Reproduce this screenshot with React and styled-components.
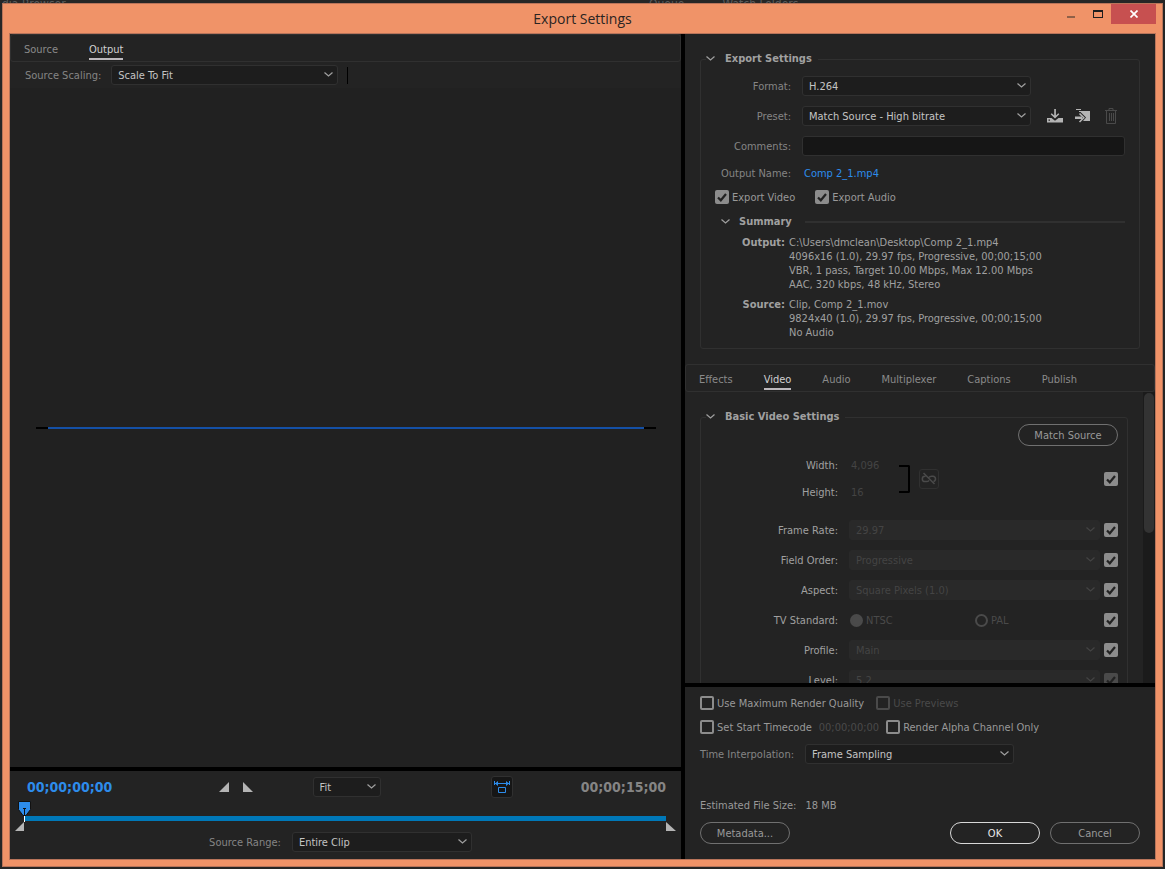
import { useState } from "react";
import styled, { createGlobalStyle, css } from "styled-components";

const TEXT_FONT = `"DejaVu Sans Condensed", "DejaVu Sans", sans-serif`;

const tick = `url("data:image/svg+xml,%3Csvg xmlns='http://www.w3.org/2000/svg' viewBox='0 0 14 14'%3E%3Cpath d='M3 7.5l2.8 2.8L11 4' fill='none' stroke='%23222' stroke-width='2.2'/%3E%3C/svg%3E")`;

const GlobalStyle = createGlobalStyle`
  * {
    box-sizing: border-box;
  }
  body {
    margin: 0;
    background: #262626;
    color: #999;
    font: 11px/14px ${TEXT_FONT};
  }
  button, input, select {
    font: inherit;
    color: inherit;
  }
`;

const Screen = styled.div`
  display: flex;
  flex-direction: column;
  height: 100vh;
  padding: 0 2px 2px;
`;

const Behind = styled.div`
  display: grid;
  grid-template-columns: 635px 1fr;
  flex: none;
  height: 3px;
  overflow: hidden;
  align-items: end;
  color: #5c5c5c;
  font-size: 12px;
  line-height: 8px;
`;

const BehindTabs = styled.div`
  display: flex;
  align-items: end;
  padding-left: ${(p) => (p.$inset ? "12px" : "0")};
`;

const BehindMenu = styled.i`
  width: 8px;
  height: 1px;
  margin: 0 20px 0 10px;
  background: #5c5c5c;
`;

const Window = styled.div`
  display: flex;
  flex-direction: column;
  flex: 1;
  min-height: 0;
  border: 1px solid #b8745a;
  background: #f09368;
`;

const TitleBar = styled.header`
  display: grid;
  grid-template-columns: 1fr auto 1fr;
  flex: none;
  height: 29px;
`;

const Title = styled.h1`
  grid-column: 2;
  margin: 0;
  color: #2a2422;
  font: 14px/29px "Open Sans", sans-serif;
`;

const WindowButtons = styled.div`
  display: flex;
  justify-content: flex-end;
  padding-right: 6px;
`;

const WindowButton = styled.button`
  display: flex;
  align-items: center;
  justify-content: center;
  width: ${(p) => (p.$close ? "45px" : "27px")};
  height: 20px;
  padding: 0;
  border: 0;
  background: ${(p) => (p.$close ? "#c75050" : "transparent")};
`;

const Content = styled.main`
  display: grid;
  grid-template-columns: minmax(0, 1fr) 470px;
  gap: 4px;
  flex: 1;
  min-height: 0;
  margin: 0 6px 6px;
  border: 1px solid #b8745a;
  background: #000;
`;

const Column = styled.div`
  display: flex;
  flex-direction: column;
  gap: 4px;
  min-height: 0;
`;

const Pane = styled.section`
  display: flex;
  flex-direction: column;
  flex: ${(p) => (p.$grow ? "1" : "none")};
  min-height: 0;
  background: #232323;
`;

const Tabs = styled.nav`
  display: flex;
  flex: none;
  gap: 31px;
  height: 28px;
  padding: 0 13px;
  border: 1px solid #303030;
  border-radius: 3px;
`;

const Tab = styled.button`
  height: 25px;
  padding: 6px 0 0;
  border: 0;
  border-bottom: 2px solid ${(p) => (p.$active ? "#bdb9bd" : "transparent")};
  background: none;
  color: ${(p) => (p.$active ? "#d0d0d0" : "#8a8a8a")};
`;

const ScalingBar = styled.div`
  display: flex;
  align-items: center;
  flex: none;
  height: 26px;
  padding-left: 15px;
`;

const Label = styled.label`
  flex: none;
  width: ${(p) => (p.$width ? p.$width + "px" : "auto")};
  margin-right: ${(p) => p.$gap ?? 11}px;
  padding-top: 2px;
  color: ${(p) => (p.$light ? "#a0a0a0" : "#858585")};
  text-align: right;
  white-space: nowrap;
`;

const SelectBox = styled.div`
  position: relative;
  flex: ${(p) => (p.$width ? "none" : "1")};
  width: ${(p) => (p.$width ? p.$width + "px" : "auto")};

  select {
    display: block;
    width: 100%;
    height: 20px;
    padding: 2px 20px 0 6px;
    border: 1px solid #303030;
    border-radius: 3px;
    appearance: none;
    background: #1d1d1d;
    color: #c4c4c4;
  }
  select:disabled {
    border-color: #292929;
    background: #292929;
    color: #444;
    opacity: 1;
  }
  svg {
    position: absolute;
    top: 7px;
    right: 5px;
    color: #a0a0a0;
    pointer-events: none;
  }
  select:disabled + svg {
    color: #444;
  }
`;

const Caret = styled.span`
  width: 1px;
  height: 17px;
  margin-left: 9px;
  background: #000;
`;

const Preview = styled.div`
  display: flex;
  flex: 1;
  align-items: center;
  padding: 0 25px 0 26px;
  background: #212121;
`;

const Frame = styled.div`
  flex: 1;
  height: 2px;
  border: solid #000;
  border-width: 0 12px;
  background: #1450a6;
`;

const Transport = styled.div`
  display: grid;
  grid-template-columns: 1fr auto 1fr;
  align-items: center;
  height: 30px;
  padding: 2px 15px 0 17px;
`;

const TransportSide = styled.div`
  display: flex;
  align-items: center;
  justify-content: space-between;
  padding: ${(p) => (p.$end ? "0 0 0 110px" : "0 60px 0 0")};
`;

const Timecode = styled.span`
  color: ${(p) => (p.$current ? "#2d8ceb" : "#858585")};
  font-size: 14px;
  font-weight: bold;
  line-height: 20px;
`;

const Marks = styled.div`
  display: flex;
  gap: 14px;
`;

const IconButton = styled.button`
  display: flex;
  align-items: center;
  justify-content: center;
  flex: none;
  width: ${(p) => p.$size}px;
  height: ${(p) => p.$size}px;
  padding: 0;
  border: ${(p) => (p.$boxed ? "1px solid #303030" : "0")};
  border-radius: 3px;
  background: ${(p) => (p.$pressed ? "#161616" : "none")};
  color: ${(p) => p.$color || "#b4b4b4"};
`;

const MarkButton = styled.button`
  display: flex;
  width: 10px;
  height: 10px;
  padding: 0;
  border: 0;
  background: none;
`;

const Timeline = styled.div`
  position: relative;
  height: 31px;
  margin: 0 15px 0 14px;
  padding-top: 15px;

  input {
    position: absolute;
    inset: 0;
    width: 100%;
    margin: 0;
    opacity: 0;
  }
`;

const Track = styled.div`
  height: 5px;
  background: #0078b8;
`;

const Playhead = styled.svg`
  position: absolute;
  top: 0;
  left: -6px;
`;

const Handle = styled.svg`
  position: absolute;
  top: 21px;
  ${(p) => (p.$out ? "right: -10px;" : "left: -9px;")}
`;

const RangeRow = styled.div`
  display: flex;
  align-items: center;
  justify-content: center;
  height: 27px;
  padding: 0 10px 7px 0;
`;

const groupBox = css`
  min-width: 0;
  border: 1px solid #303030;
  border-radius: 3px;
`;

const ExportGroup = styled.fieldset`
  ${groupBox}
  margin: 18px 15px 15px;
  padding: 10px 14px 8px 0;
`;

const VideoGroup = styled.fieldset`
  ${groupBox}
  align-self: start;
  flex: 1;
  margin: 18px 15px 0;
  padding: 0 9px 10px 0;
`;

const Legend = styled.legend`
  display: flex;
  align-items: center;
  gap: 10px;
  margin-left: 5px;
  padding: 0 6px 0 0;
  color: #a0a0a0;
  font-weight: bold;
`;

const Row = styled.div`
  display: flex;
  align-items: center;
  height: ${(p) => p.$height ?? 20}px;
  margin-bottom: 10px;
`;

const PresetButtons = styled.div`
  display: flex;
  gap: 12px;
  margin-left: 16px;
`;

const TextInput = styled.input`
  flex: 1;
  min-width: 0;
  height: 20px;
  padding: 0 6px;
  border: 1px solid #303030;
  border-radius: 3px;
  background: #161616;
`;

const FileLink = styled.a`
  margin-left: 2px;
  padding-top: 2px;
  color: #2d8ceb;
  text-decoration: none;
`;

const Checks = styled.div`
  display: flex;
  align-items: center;
  gap: ${(p) => p.$gap}px;
  height: 14px;
  margin: 0 0 10px ${(p) => (p.$inset ? "14px" : "0")};
`;

const CheckLabel = styled.label`
  display: flex;
  align-items: center;
  gap: 3px;
  color: ${(p) => (p.$off ? "#4a4a4a" : "#999")};
  white-space: nowrap;

  span {
    padding-top: 2px;
  }
`;

const Checkbox = styled.input.attrs({ type: "checkbox" })`
  flex: none;
  width: 14px;
  height: 14px;
  margin: 0;
  border: 2px solid #8c8c8c;
  border-radius: 2px;
  appearance: none;

  &:checked {
    border: 0;
    background: #8c8c8c ${tick};
  }
  &:disabled {
    border-color: #4a4a4a;
  }
  &:checked:disabled {
    background-color: #4a4a4a;
  }
`;

const MatchBox = styled(Checkbox)`
  margin-left: 4px;
`;

const SummaryTitle = styled.h2`
  display: flex;
  align-items: center;
  gap: 9px;
  margin: 0 0 7px 20px;
  padding-top: 1px;
  color: #a0a0a0;
  font-size: 11px;
  line-height: 14px;

  &::after {
    content: "";
    flex: 1;
    height: 2px;
    margin-left: 4px;
    background: #303030;
  }
`;

const Summary = styled.dl`
  display: grid;
  grid-template-columns: 84px 1fr;
  gap: 6px 4px;
  margin: 0;
  color: #a0a0a0;

  dt {
    font-weight: bold;
    text-align: right;
  }
  dd {
    margin: 0;
    white-space: pre-line;
  }
`;

const Scroller = styled.div`
  display: flex;
  flex: 1;
  min-height: 0;
  overflow: hidden;
`;

const ScrollBar = styled.div`
  flex: none;
  width: 12px;
  padding: 1px;
  background: #1b1b1b;

  &::before {
    content: "";
    display: block;
    height: 140px;
    border-radius: 5px;
    background: #333;
  }
`;

const Pill = styled.button`
  width: ${(p) => p.$width ?? 90}px;
  height: 22px;
  padding: 2px 0 0;
  border: 1px solid ${(p) => (p.$primary ? "#d8d8d8" : "#707070")};
  border-radius: 11px;
  background: none;
  color: ${(p) => (p.$primary ? "#e8e8e8" : "#999")};
`;

const MatchRow = styled.div`
  display: flex;
  justify-content: flex-end;
`;

const SizeRow = styled.div`
  display: flex;
  align-items: center;
  margin: 8px 0 17px;
`;

const SizeFields = styled.div`
  display: grid;
  grid-template-columns: 137px 49px;
  gap: 7px 12px;
  padding-top: 2px;
  line-height: 20px;
  text-align: right;

  input {
    min-width: 0;
    height: 20px;
    padding: 0 0 0 1px;
    border: 0;
    background: none;
    color: #444;
  }
  label {
    color: #a0a0a0;
  }
`;

const LinkBracket = styled.span`
  width: 11px;
  height: 28px;
  margin-right: 9px;
  border: 2px solid #000;
  border-left: 0;
  border-radius: 0 2px 2px 0;
`;

const Push = styled.span`
  flex: 1;
`;

const Radios = styled.div`
  display: grid;
  grid-template-columns: 125px 1fr;
  flex: 1;
  padding-left: 1px;
`;

const Radio = styled.input.attrs({ type: "radio" })`
  width: 13px;
  height: 13px;
  margin: 0;
  border: 2px solid #4a4a4a;
  border-radius: 50%;
  appearance: none;

  &:checked {
    background: #4a4a4a;
  }
`;

const Footer = styled(Pane)`
  height: 172px;
  padding: 9px 15px 15px;
`;

const Dim = styled.span`
  padding-top: 2px;
  color: #4a4a4a;
`;

const Estimate = styled.div`
  display: flex;
  gap: 9px;
  margin-top: auto;
`;

const Actions = styled.div`
  display: flex;
  gap: 10px;
  margin-top: 9px;
`;

const Chevron = () => (
  <svg width="9" height="6" viewBox="0 0 9 6" fill="none" stroke="currentColor">
    <path d="M.5 .5l4 3.500 4-3.500" strokeWidth="1.200" />
  </svg>
);

function Select({ id, value, width, disabled, label }) {
  return (
    <SelectBox $width={width}>
      <select id={id} disabled={disabled} aria-label={label} defaultValue={value}>
        <option>{value}</option>
      </select>
      <Chevron />
    </SelectBox>
  );
}

function Check({ children, off, checked }) {
  return (
    <CheckLabel $off={off}>
      <Checkbox defaultChecked={checked} disabled={off} />
      <span>{children}</span>
    </CheckLabel>
  );
}

const SaveIcon = () => (
  <svg width="16" height="16" viewBox="0 0 16 16" fill="currentColor">
    <path d="M7.200 1h1.700v6.500l2.400-2.200 1 1L8 10.500 3.700 6.300l1-1 2.500 2.200z" />
    <path d="M0 10h4.500L8 12.800l3.500-2.800H16v4.500H0z" />
    <path d="M1.500 11.500h1.500v1.300H1.500z" fill="#232323" />
  </svg>
);

const ImportIcon = () => (
  <svg width="16" height="16" viewBox="0 0 16 16" fill="currentColor">
    <path d="M1 1h5v1H1zM4 3h11v10H8l3-3.500L5.500 4H4z" />
    <path d="M0 8.500h7v2.500H0z" />
    <path d="M4.500 5.500l4.300 4.200-4.300 4.300" fill="none" stroke="currentColor" strokeWidth="1.600" />
  </svg>
);

const TrashIcon = () => (
  <svg width="16" height="16" viewBox="0 0 16 16" fill="none" stroke="currentColor">
    <path d="M2 2.500h12M6 2V.5h4V2M3.500 3v12.500h9V3M6.500 5v8M8.500 5v8M10.500 5v8" />
  </svg>
);

const BrokenLinkIcon = () => (
  <svg width="16" height="16" viewBox="0 0 16 16" fill="none" stroke="currentColor" strokeWidth="1.500">
    <path d="M4.500 5.200H4a2.700 2.700 0 0 0 0 5.400h1.500c1.200 0 2-.4 2.500-1.300M8 6.500c.5-.9 1.300-1.300 2.500-1.300H12a2.700 2.700 0 0 1 .5 5.300M2.500 2l11 11" />
  </svg>
);

const FitRangeIcon = () => (
  <svg width="16" height="14" viewBox="0 0 16 14" fill="none" stroke="currentColor">
    <path d="M1 3.500h14M.5 1v4M15.500 1v4M4.500 7.500h7v5h-7z" />
    <path d="M1 3.500L4 1v5zM15 3.500L12 1v5z" fill="currentColor" stroke="none" />
  </svg>
);

const tabs = ["Effects", "Video", "Audio", "Multiplexer", "Captions", "Publish"];

const videoRows = [
  { id: "frame-rate", label: "Frame Rate:", value: "29.97" },
  { id: "field-order", label: "Field Order:", value: "Progressive" },
  { id: "aspect", label: "Aspect:", value: "Square Pixels (1.0)" },
  { id: "tv", label: "TV Standard:", radios: ["NTSC", "PAL"] },
  { id: "profile", label: "Profile:", value: "Main" },
  { id: "level", label: "Level:", value: "5.2", locked: true },
];

function OutputPreview() {
  const [view, setView] = useState("Output");
  return (
    <Column>
      <Pane $grow>
        <Tabs>
          {["Source", "Output"].map((name) => (
            <Tab key={name} $active={view === name} onClick={() => setView(name)}>
              {name}
            </Tab>
          ))}
        </Tabs>
        <ScalingBar>
          <Label htmlFor="scaling" $gap={10}>Source Scaling:</Label>
          <Select id="scaling" value="Scale To Fit" width={227} />
          <Caret />
        </ScalingBar>
        <Preview>
          <Frame />
        </Preview>
      </Pane>
      <Pane>
        <Transport>
          <TransportSide>
            <Timecode $current>00;00;00;00</Timecode>
            <Marks>
              <MarkButton aria-label="Set in point">
                <svg width="10" height="10"><path d="M10 0v10H0z" fill="#b4b4b4" /></svg>
              </MarkButton>
              <MarkButton aria-label="Set out point">
                <svg width="10" height="10"><path d="M0 0v10h10z" fill="#b4b4b4" /></svg>
              </MarkButton>
            </Marks>
          </TransportSide>
          <Select label="Zoom" value="Fit" width={68} />
          <TransportSide $end>
            <IconButton $size={22} $boxed $pressed $color="#2d8ceb" aria-label="Aspect correction">
              <FitRangeIcon />
            </IconButton>
            <Timecode>00;00;15;00</Timecode>
          </TransportSide>
        </Transport>
        <Timeline>
          <Track />
          <Playhead width="13" height="21">
            <path d="M.5 .5h12v8l-4.500 6h-3l-4.500-6z" fill="#2d8ceb" stroke="#111" />
            <path d="M5 7.500h3M6.500 7v8" stroke="#111" />
            <path d="M6.500 15v6" stroke="#fff" />
          </Playhead>
          <Handle width="9" height="9"><path d="M9 0v9H0z" fill="#b4b4b4" /></Handle>
          <Handle $out width="10" height="9"><path d="M0 0v9h10z" fill="#b4b4b4" /></Handle>
          <input type="range" min="0" max="450" defaultValue="0" aria-label="Current time" />
        </Timeline>
        <RangeRow>
          <Label htmlFor="range">Source Range:</Label>
          <Select id="range" value="Entire Clip" width={180} />
        </RangeRow>
      </Pane>
    </Column>
  );
}

function ExportSettings() {
  return (
    <ExportGroup>
      <Legend><Chevron />Export Settings</Legend>
      <Row>
        <Label htmlFor="format" $width={90}>Format:</Label>
        <Select id="format" value="H.264" width={229} />
      </Row>
      <Row>
        <Label htmlFor="preset" $width={90}>Preset:</Label>
        <Select id="preset" value="Match Source - High bitrate" width={229} />
        <PresetButtons>
          <IconButton $size={16} aria-label="Save preset"><SaveIcon /></IconButton>
          <IconButton $size={16} aria-label="Import preset"><ImportIcon /></IconButton>
          <IconButton $size={16} $color="#4a4a4a" aria-label="Delete preset" disabled><TrashIcon /></IconButton>
        </PresetButtons>
      </Row>
      <Row>
        <Label htmlFor="comments" $width={90}>Comments:</Label>
        <TextInput id="comments" />
      </Row>
      <Row $height={14}>
        <Label as="span" $width={90}>Output Name:</Label>
        <FileLink href="#output">Comp 2_1.mp4</FileLink>
      </Row>
      <Checks $gap={20} $inset>
        <Check checked>Export Video</Check>
        <Check checked>Export Audio</Check>
      </Checks>
      <SummaryTitle><Chevron />Summary</SummaryTitle>
      <Summary>
        <dt>Output:</dt>
        <dd>
          {"C:\\Users\\dmclean\\Desktop\\Comp 2_1.mp4\n4096x16 (1.0), 29.97 fps, Progressive, 00;00;15;00\nVBR, 1 pass, Target 10.00 Mbps, Max 12.00 Mbps\nAAC, 320 kbps, 48 kHz, Stereo"}
        </dd>
        <dt>Source:</dt>
        <dd>
          {"Clip, Comp 2_1.mov\n9824x40 (1.0), 29.97 fps, Progressive, 00;00;15;00\nNo Audio"}
        </dd>
      </Summary>
    </ExportGroup>
  );
}

function VideoSettings() {
  return (
    <Scroller>
      <VideoGroup>
        <Legend><Chevron />Basic Video Settings</Legend>
        <MatchRow><Pill $width={100}>Match Source</Pill></MatchRow>
        <SizeRow>
          <SizeFields>
            <label htmlFor="width">Width:</label>
            <input id="width" defaultValue="4,096" disabled />
            <label htmlFor="height">Height:</label>
            <input id="height" defaultValue="16" disabled />
          </SizeFields>
          <LinkBracket />
          <IconButton $size={20} $boxed $color="#4a4a4a" aria-label="Link size" disabled>
            <BrokenLinkIcon />
          </IconButton>
          <Push />
          <Checkbox defaultChecked aria-label="Match size" />
        </SizeRow>
        {videoRows.map((row) => (
          <Row key={row.id}>
            <Label as={row.radios && "span"} htmlFor={row.radios ? undefined : row.id} $width={137} $light>
              {row.label}
            </Label>
            {row.radios ? (
              <Radios>
                {row.radios.map((name, i) => (
                  <CheckLabel key={name} $off>
                    <Radio name={row.id} defaultChecked={i === 0} disabled />
                    <span>{name}</span>
                  </CheckLabel>
                ))}
              </Radios>
            ) : (
              <Select id={row.id} value={row.value} disabled />
            )}
            <MatchBox defaultChecked disabled={row.locked} aria-label={"Match " + row.label} />
          </Row>
        ))}
      </VideoGroup>
      <ScrollBar />
    </Scroller>
  );
}

function App() {
  const [tab, setTab] = useState("Video");
  return (
    <Screen>
      <GlobalStyle />
      <Behind aria-hidden="true">
        <BehindTabs><span>dia Browser</span><BehindMenu /></BehindTabs>
        <BehindTabs $inset><span>Queue</span><BehindMenu /><span>Watch Folders</span></BehindTabs>
      </Behind>
      <Window>
        <TitleBar>
          <Title>Export Settings</Title>
          <WindowButtons>
            <WindowButton aria-label="Minimize">
              <svg width="8" height="8"><path d="M0 6h8v2H0z" fill="#8f6048" /></svg>
            </WindowButton>
            <WindowButton aria-label="Maximize">
              <svg width="10" height="8"><path d="M0 0h10v8H0zM1 2v5h8V2z" fill="#1e1e1e" fillRule="evenodd" /></svg>
            </WindowButton>
            <WindowButton $close aria-label="Close">
              <svg width="8" height="8" stroke="#fff" strokeWidth="1.700"><path d="M.5 .5l7 7M7.500 .5l-7 7" /></svg>
            </WindowButton>
          </WindowButtons>
        </TitleBar>
        <Content>
          <OutputPreview />
          <Column>
            <Pane $grow>
              <ExportSettings />
              <Tabs>
                {tabs.map((name) => (
                  <Tab key={name} $active={tab === name} onClick={() => setTab(name)}>
                    {name}
                  </Tab>
                ))}
              </Tabs>
              <VideoSettings />
            </Pane>
            <Footer>
              <Checks $gap={12}>
                <Check>Use Maximum Render Quality</Check>
                <Check off>Use Previews</Check>
              </Checks>
              <Checks $gap={7}>
                <Check>Set Start Timecode</Check>
                <Dim>00;00;00;00</Dim>
                <Check>Render Alpha Channel Only</Check>
              </Checks>
              <Row>
                <Label htmlFor="interpolation">Time Interpolation:</Label>
                <Select id="interpolation" value="Frame Sampling" width={209} />
              </Row>
              <Estimate><span>Estimated File Size:</span><span>18 MB</span></Estimate>
              <Actions>
                <Pill>Metadata...</Pill>
                <Push />
                <Pill $primary>OK</Pill>
                <Pill>Cancel</Pill>
              </Actions>
            </Footer>
          </Column>
        </Content>
      </Window>
    </Screen>
  );
}

export default App;
